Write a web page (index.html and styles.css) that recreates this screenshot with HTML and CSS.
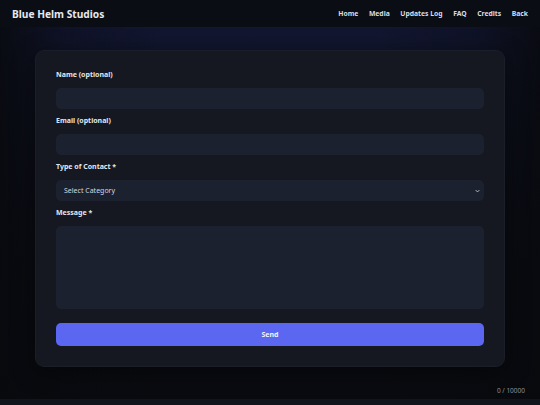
FILE: index.html
```html
<!DOCTYPE html>
<html lang="en">
<head>
<meta charset="utf-8">
<title>Contact - Blue Helm Studios</title>
<link rel="stylesheet" href="styles.css">
</head>
<body>
<header class="topbar">
  <div class="brand">Blue Helm Studios</div>
  <nav class="nav">
    <a href="#">Home</a>
    <a href="#">Media</a>
    <a href="#">Updates Log</a>
    <a href="#">FAQ</a>
    <a href="#">Credits</a>
    <a href="#">Back</a>
  </nav>
</header>
<main class="main">
  <form class="card">
    <div class="field">
      <label class="label">Name (optional)</label>
      <input class="input" type="text">
    </div>
    <div class="field">
      <label class="label">Email (optional)</label>
      <input class="input" type="email">
    </div>
    <div class="field">
      <label class="label">Type of Contact *</label>
      <div class="select">
        <span>Select Category</span>
        <svg class="chev" viewBox="0 0 8 5" width="5" height="4"><path d="M1 1 L4 4 L7 1" fill="none" stroke="#c9ccd4" stroke-width="1.4"/></svg>
      </div>
    </div>
    <div class="field">
      <label class="label">Message *</label>
      <textarea class="textarea"></textarea>
    </div>
    <button class="send" type="button">Send</button>
  </form>
  <div class="counter">0 / 10000</div>
</main>
<footer class="footer"></footer>
</body>
</html>
```
FILE: styles.css
```css
* { box-sizing: border-box; }
html, body { margin: 0; padding: 0; }
body {
  font-family: "Noto Sans", "Open Sans", sans-serif;
  background: #090a0e;
  color: #e1e4ea;
}
.topbar {
  height: 27px;
  background: #0b0d14;
  display: flex;
  align-items: center;
  justify-content: space-between;
  padding: 0 12px;
}
.brand {
  font-size: 10.2px;
  font-weight: 700;
  color: #e6e8ee;
}
.nav {
  display: flex;
  gap: 10.5px;
}
.nav a {
  font-size: 6.8px;
  font-weight: 700;
  color: #d9dce3;
  text-decoration: none;
}
.main {
  height: 372px;
  padding-top: 23px;
  background:
    linear-gradient(90deg, rgba(8,9,13,0.85) 0%, rgba(8,9,13,0.25) 12%, rgba(8,9,13,0) 30%, rgba(8,9,13,0) 70%, rgba(8,9,13,0.25) 88%, rgba(8,9,13,0.85) 100%),
    linear-gradient(180deg, #121630 0%, #10142a 12%, #0e1120 35%, #0b0d15 65%, #0a0b10 100%);
}
.card {
  width: 470px;
  margin: 0 auto;
  background: #151820;
  border: 1px solid #1a1e28;
  border-radius: 9px;
  padding: 19px 20px 20px;
  box-shadow: 0 6px 24px rgba(0,0,0,0.45);
}
.field {
  margin-bottom: 7px;
}
.label {
  display: block;
  font-size: 7px;
  line-height: 10px;
  font-weight: 700;
  color: #e3e6ec;
  margin-bottom: 8px;
}
.input, .select, .textarea {
  display: block;
  width: 100%;
  height: 21px;
  background: #1c2130;
  border: none;
  border-radius: 5px;
  outline: none;
}
.select {
  display: flex;
  align-items: center;
  justify-content: space-between;
  padding: 0 4px 0 8px;
  font-size: 7px;
  color: #d4d7de;
}
.chev { display: block; }
.textarea {
  height: 83px;
  resize: none;
}
.send {
  display: block;
  width: 100%;
  height: 23px;
  margin-top: 14px;
  background: #5b67f0;
  border: none;
  border-radius: 5px;
  color: #f2f3fb;
  font-family: inherit;
  font-size: 7px;
  font-weight: 700;
}
.counter {
  width: 540px;
  margin: 19px auto 0;
  padding-right: 15px;
  text-align: right;
  font-size: 6.5px;
  color: #8b909b;
}
.footer {
  height: 40px;
  background: #11141b;
}
```
